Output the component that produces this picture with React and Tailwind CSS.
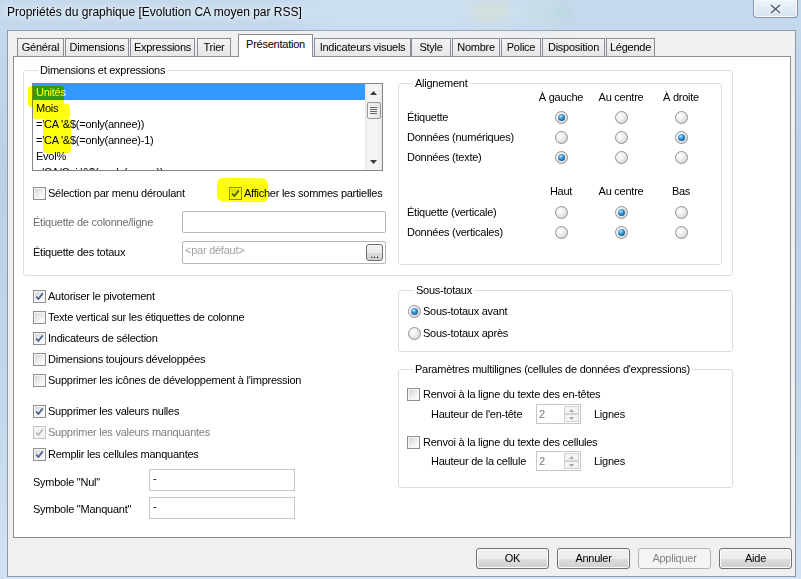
import React from "react";

function Check({ checked, disabled }) {
  return (
    <div
      className={`w-[13px] h-[13px] shrink-0 border ${
        disabled
          ? "border-[#c4c4c4] bg-[#f4f4f4]"
          : "border-[#8e8f8f] bg-[linear-gradient(135deg,#cfcfcf,#f2f2f2_60%,#fdfdfd)] shadow-[inset_0_0_0_1px_#f6f6f6]"
      }`}
    >
      {checked && (
        <svg width="11" height="11" viewBox="0 0 11 11" className="block">
          <path
            d="M2.2 5.6 L4.4 8 L8.8 2.4"
            fill="none"
            stroke={disabled ? "#b8b8b8" : "#4a5e8f"}
            strokeWidth="1.7"
          />
        </svg>
      )}
    </div>
  );
}

function Radio({ checked }) {
  return (
    <div className="w-[13px] h-[13px] shrink-0 rounded-full border border-[#8f9292] bg-[radial-gradient(circle_at_35%_35%,#ffffff,#ececec_45%,#c6c6c6)] flex items-center justify-center">
      {checked && (
        <div className="w-[7px] h-[7px] rounded-full bg-[radial-gradient(circle_at_40%_35%,#b0e6ff,#2b88d2_45%,#0c3d6e)]" />
      )}
    </div>
  );
}

function Btn({ children, disabled }) {
  return (
    <div
      className={`w-[73px] h-[21px] rounded-[3px] border flex items-center justify-center ${
        disabled
          ? "border-[#adb2b5] bg-[#f4f4f4] text-[#838383]"
          : "border-[#707070] bg-[linear-gradient(#f2f2f2_0%,#ebebeb_50%,#dddddd_51%,#cfcfcf_100%)] shadow-[inset_0_0_0_1px_#fbfbfb]"
      }`}
    >
      {children}
    </div>
  );
}

function Tab({ w, children }) {
  return (
    <div
      className={`${w} h-[18px] shrink-0 border border-b-0 border-[#898c95] bg-[linear-gradient(#f4f4f4,#e6e6e6)] flex items-center justify-center whitespace-nowrap`}
    >
      {children}
    </div>
  );
}

function Spin() {
  return (
    <div className="w-[45px] h-[20px] border border-[#c3c6cc] bg-white flex">
      <div className="flex-1 pl-[2px] pt-[3px] text-[#7a7a7a]">2</div>
      <div className="w-[17px] flex flex-col p-[1px] gap-0">
        <div className="flex-1 border border-[#d2d2d2] bg-[#f3f3f3] flex items-center justify-center">
          <svg width="5" height="3" viewBox="0 0 5 3" className="block">
            <path d="M0 3 L2.5 0 L5 3Z" fill="#a8a8a8" />
          </svg>
        </div>
        <div className="flex-1 border border-[#d2d2d2] bg-[#f3f3f3] flex items-center justify-center">
          <svg width="5" height="3" viewBox="0 0 5 3" className="block">
            <path d="M0 0 L2.5 3 L5 0Z" fill="#a8a8a8" />
          </svg>
        </div>
      </div>
    </div>
  );
}

function Row({ checked, disabled, children, cls }) {
  return (
    <div className={`h-[16px] flex items-center gap-[2px] ${cls || ""}`}>
      <Check checked={checked} disabled={disabled} />
      <span className={disabled ? "text-[#7d7d7d]" : ""}>{children}</span>
    </div>
  );
}

export default function App() {
  const listItems = [
    "Unités",
    "Mois",
    "='CA '&$(=only(annee))",
    "='CA '&$(=only(annee)-1)",
    "Evol%",
    "='CA/Cai '&$(=only(annee))",
  ];
  return (
    <div className="w-[801px] h-[579px] overflow-hidden relative bg-[linear-gradient(180deg,#c6daee,#b9d0e9_30%,#c3d8ed_70%,#d2e3f3)] font-['Liberation_Sans',Arial,sans-serif] text-[11px] leading-[13px] text-black tracking-[-0.25px]">
      {/* blurred backdrop in the glass */}
      <div className="absolute left-[470px] top-[2px] w-[40px] h-[18px] rounded-full bg-[#d9d7a6] blur-[6px] opacity-70" />
      <div className="absolute left-[520px] top-[4px] w-[50px] h-[16px] rounded-full bg-[#a9cfc0] blur-[7px] opacity-60" />
      <div className="absolute left-[300px] top-[0px] w-[260px] h-[24px] rounded-full bg-[#d4e6f7] blur-[10px] opacity-70" />

      {/* title bar */}
      <div className="h-[30px] flex items-start relative">
        <div className="pl-[7px] pt-[5px] text-[12px] leading-[15px] tracking-[0px] [text-shadow:0_0_6px_#ffffff,0_0_10px_#ffffff]">
          Propriétés du graphique [Evolution CA moyen par RSS]
        </div>
        <div className="ml-auto mr-[3px] w-[45px] h-[18px] rounded-b-[4px] border border-t-0 border-[#8696aa] bg-[linear-gradient(#eef4fa,#d6e3f1)] shadow-[inset_0_0_0_1px_#f5f9fd] flex items-center justify-center">
          <svg width="11" height="10" viewBox="0 0 11 10" className="block">
            <path d="M1.5 1.5 L9.5 8.5 M9.5 1.5 L1.5 8.5" stroke="#ffffff" strokeWidth="3.4" strokeLinecap="square" />
            <path d="M1.5 1.5 L9.5 8.5 M9.5 1.5 L1.5 8.5" stroke="#5b6670" strokeWidth="1.6" strokeLinecap="square" />
          </svg>
        </div>
      </div>

      {/* client area */}
      <div className="ml-[7px] w-[789px] h-[547px] border border-[#8d99a6] bg-[#f0f0f0] flex flex-col">
        {/* tab strip */}
        <div className="mt-[3px] h-[22px] pl-[9px] flex items-end">
          <Tab w="w-[47px]">Général</Tab>
          <div className="ml-[1px]" />
          <Tab w="w-[64px]">Dimensions</Tab>
          <div className="ml-[1px]" />
          <Tab w="w-[65px]">Expressions</Tab>
          <div className="ml-[2px]" />
          <Tab w="w-[34px]">Trier</Tab>
          <div className="ml-[7px] w-[75px] h-[23px] -mb-[1px] relative z-10 shrink-0 border border-b-0 border-[#898c95] bg-white flex items-start justify-center pt-[3px]">
            Présentation
          </div>
          <div className="ml-[1px]" />
          <Tab w="w-[97px]">Indicateurs visuels</Tab>
          <Tab w="w-[40px]">Style</Tab>
          <div className="ml-[1px]" />
          <Tab w="w-[48px]">Nombre</Tab>
          <div className="ml-[1px]" />
          <Tab w="w-[40px]">Police</Tab>
          <div className="ml-[1px]" />
          <Tab w="w-[63px]">Disposition</Tab>
          <div className="ml-[1px]" />
          <Tab w="w-[49px]">Légende</Tab>
        </div>

        {/* tab panel */}
        <div className="ml-[5px] w-[778px] h-[482px] border border-[#898c95] bg-white">
          {/* Dimensions et expressions */}
          <fieldset className="ml-[9px] mt-[7px] w-[710px] border border-[#d5dfe5] rounded-[3px] pl-[8px] pr-[10px] pb-[10px]">
            <legend className="ml-[6px] px-[2px] leading-[13px]">Dimensions et expressions</legend>
            <div className="flex items-start">
              {/* left column */}
              <div className="w-[366px] shrink-0">
                <div className="mt-[6px] w-[351px] h-[88px] border border-[#828790] bg-white flex overflow-hidden">
                  <div className="flex-1 overflow-hidden">
                    {listItems.map((t, i) => (
                      <div
                        key={i}
                        className={`h-[16px] leading-[16px] pl-[3px] whitespace-nowrap ${
                          i === 0 ? "bg-[#3399ff] text-white" : ""
                        }`}
                      >
                        {t}
                      </div>
                    ))}
                  </div>
                  <div className="w-[17px] h-full shrink-0 flex flex-col items-center bg-[linear-gradient(90deg,#e6e6e6,#f4f4f4_18%,#f4f4f4_82%,#e6e6e6)]">
                    <div className="h-[17px] w-full flex items-center justify-center">
                      <svg width="7" height="4" viewBox="0 0 7 4" className="block">
                        <path d="M0 4 L3.5 0 L7 4Z" fill="#3c3c3c" />
                      </svg>
                    </div>
                    <div className="mt-[1px] w-[14px] h-[17px] rounded-[2px] border border-[#979797] bg-[linear-gradient(90deg,#f6f6f6,#e4e4e4)] flex flex-col items-center justify-center gap-[1px]">
                      <div className="w-[7px] h-[1px] bg-[#6a6a6a]" />
                      <div className="w-[7px] h-[1px] bg-[#6a6a6a]" />
                      <div className="w-[7px] h-[1px] bg-[#6a6a6a]" />
                      <div className="w-[7px] h-[1px] bg-[#6a6a6a]" />
                    </div>
                    <div className="flex-1" />
                    <div className="h-[17px] w-full flex items-center justify-center">
                      <svg width="7" height="4" viewBox="0 0 7 4" className="block">
                        <path d="M0 0 L3.5 4 L7 0Z" fill="#3c3c3c" />
                      </svg>
                    </div>
                  </div>
                </div>

                <div className="mt-[14px] h-[16px] pl-[1px] flex items-center">
                  <div className="w-[196px] flex items-center gap-[2px]">
                    <Check />
                    <span>Sélection par menu déroulant</span>
                  </div>
                  <div className="flex items-center gap-[2px]">
                    <Check checked />
                    <span>Afficher les sommes partielles</span>
                  </div>
                </div>

                <div className="mt-[10px] h-[22px] flex items-center">
                  <div className="w-[150px] pl-[1px] text-[#6d6d6d]">Étiquette de colonne/ligne</div>
                  <div className="w-[204px] h-[22px] border border-[#b4b7bd] rounded-[2px] bg-white" />
                </div>
                <div className="mt-[8px] h-[23px] flex items-center">
                  <div className="w-[150px] pl-[1px]">Étiquette des totaux</div>
                  <div className="w-[204px] h-[23px] border border-[#b4b7bd] rounded-[2px] bg-white flex items-center pl-[2px] pr-[2px]">
                    <span className="flex-1 text-[#a0a0a0] self-start pt-[2px]">&lt;par défaut&gt;</span>
                    <div className="w-[17px] h-[17px] rounded-[3px] border border-[#707070] bg-[linear-gradient(#f2f2f2,#ebebeb_50%,#dddddd_51%,#cfcfcf)] flex items-end justify-center pb-[3px] leading-[6px]">
                      ...
                    </div>
                  </div>
                </div>
              </div>

              {/* Alignement */}
              <fieldset className="w-[324px] shrink-0 border border-[#d5dfe5] rounded-[3px] pl-[8px] pb-[22px]">
                <legend className="ml-[6px] px-[2px] leading-[13px]">Alignement</legend>
                <div className="mt-[1px] h-[13px] flex">
                  <div className="w-[124px]" />
                  <div className="w-[60px] text-center">À gauche</div>
                  <div className="w-[60px] text-center">Au centre</div>
                  <div className="w-[60px] text-center">À droite</div>
                </div>
                <div className="mt-[3px]">
                  {[
                    ["Étiquette", 0],
                    ["Données (numériques)", 2],
                    ["Données (texte)", 0],
                  ].map(([l, s]) => (
                    <div key={l} className="h-[20px] flex items-center">
                      <div className="w-[124px]">{l}</div>
                      {[0, 1, 2].map((c) => (
                        <div key={c} className="w-[60px] flex justify-center">
                          <Radio checked={c === s} />
                        </div>
                      ))}
                    </div>
                  ))}
                </div>
                <div className="mt-[18px] h-[13px] flex">
                  <div className="w-[124px]" />
                  <div className="w-[60px] text-center">Haut</div>
                  <div className="w-[60px] text-center">Au centre</div>
                  <div className="w-[60px] text-center">Bas</div>
                </div>
                <div className="mt-[4px]">
                  {[
                    ["Étiquette (verticale)", 1],
                    ["Données (verticales)", 1],
                  ].map(([l, s]) => (
                    <div key={l} className="h-[20px] flex items-center">
                      <div className="w-[124px]">{l}</div>
                      {[0, 1, 2].map((c) => (
                        <div key={c} className="w-[60px] flex justify-center">
                          <Radio checked={c === s} />
                        </div>
                      ))}
                    </div>
                  ))}
                </div>
              </fieldset>
            </div>
          </fieldset>

          {/* lower section */}
          <div className="pl-[19px] flex items-start">
            <div className="w-[365px] shrink-0 pt-[12px]">
              <Row checked>Autoriser le pivotement</Row>
              <Row cls="mt-[5px]">Texte vertical sur les étiquettes de colonne</Row>
              <Row checked cls="mt-[5px]">Indicateurs de sélection</Row>
              <Row cls="mt-[5px]">Dimensions toujours développées</Row>
              <Row cls="mt-[5px]">Supprimer les icônes de développement à l'impression</Row>
              <Row checked cls="mt-[15px]">Supprimer les valeurs nulles</Row>
              <Row checked disabled cls="mt-[5px]">Supprimer les valeurs manquantes</Row>
              <Row checked cls="mt-[6px]">Remplir les cellules manquantes</Row>
              <div className="mt-[7px] h-[22px] flex items-start">
                <div className="w-[116px] pt-[7px]">Symbole "Nul"</div>
                <div className="w-[146px] h-[22px] border border-[#c3c6cc] bg-white pl-[3px] pt-[2px]">-</div>
              </div>
              <div className="mt-[6px] h-[22px] flex items-start">
                <div className="w-[116px] pt-[6px]">Symbole "Manquant"</div>
                <div className="w-[146px] h-[22px] border border-[#c3c6cc] bg-white pl-[3px] pt-[2px]">-</div>
              </div>
            </div>

            <div className="pt-[8px]">
              <fieldset className="w-[335px] border border-[#d5dfe5] rounded-[3px] pl-[9px] pb-[10px]">
                <legend className="ml-[6px] px-[2px] leading-[13px]">Sous-totaux</legend>
                <div className="mt-[6px] h-[16px] flex items-center gap-[2px]">
                  <Radio checked />
                  <span>Sous-totaux avant</span>
                </div>
                <div className="mt-[6px] h-[16px] flex items-center gap-[2px]">
                  <Radio />
                  <span>Sous-totaux après</span>
                </div>
              </fieldset>

              <fieldset className="mt-[11px] w-[335px] border border-[#d5dfe5] rounded-[3px] pl-[8px] pb-[16px]">
                <legend className="ml-[6px] px-[2px] leading-[13px]">
                  Paramètres multilignes (cellules de données d'expressions)
                </legend>
                <div className="mt-[10px] h-[16px] flex items-center gap-[3px]">
                  <Check />
                  <span>Renvoi à la ligne du texte des en-têtes</span>
                </div>
                <div className="mt-[2px] h-[20px] pl-[24px] flex items-center">
                  <div className="w-[105px]">Hauteur de l'en-tête</div>
                  <Spin />
                  <div className="ml-[13px]">Lignes</div>
                </div>
                <div className="mt-[10px] h-[16px] flex items-center gap-[3px]">
                  <Check />
                  <span>Renvoi à la ligne du texte des cellules</span>
                </div>
                <div className="mt-[1px] h-[20px] pl-[24px] flex items-center">
                  <div className="w-[105px]">Hauteur de la cellule</div>
                  <Spin />
                  <div className="ml-[13px]">Lignes</div>
                </div>
              </fieldset>
            </div>
          </div>
        </div>

        {/* buttons */}
        <div className="mt-[10px] pr-[3px] flex justify-end gap-[8px]">
          <Btn>OK</Btn>
          <Btn>Annuler</Btn>
          <Btn disabled>Appliquer</Btn>
          <Btn>Aide</Btn>
        </div>
      </div>

      {/* highlighter marks */}
      <div className="absolute left-[28px] top-[86px] w-[36px] h-[21px] rounded-[3px] bg-[#ffff00] mix-blend-multiply opacity-95" />
      <div className="absolute left-[33px] top-[104px] w-[37px] h-[15px] rounded-[4px] bg-[#ffff00] mix-blend-multiply opacity-95 -rotate-2" />
      <div className="absolute left-[43px] top-[118px] w-[28px] h-[35px] rounded-[4px] bg-[#ffff00] mix-blend-multiply opacity-95" />
      <div className="absolute left-[217px] top-[178px] w-[51px] h-[24px] rounded-[6px] bg-[#ffff00] mix-blend-multiply opacity-95 rotate-1" />
    </div>
  );
}
